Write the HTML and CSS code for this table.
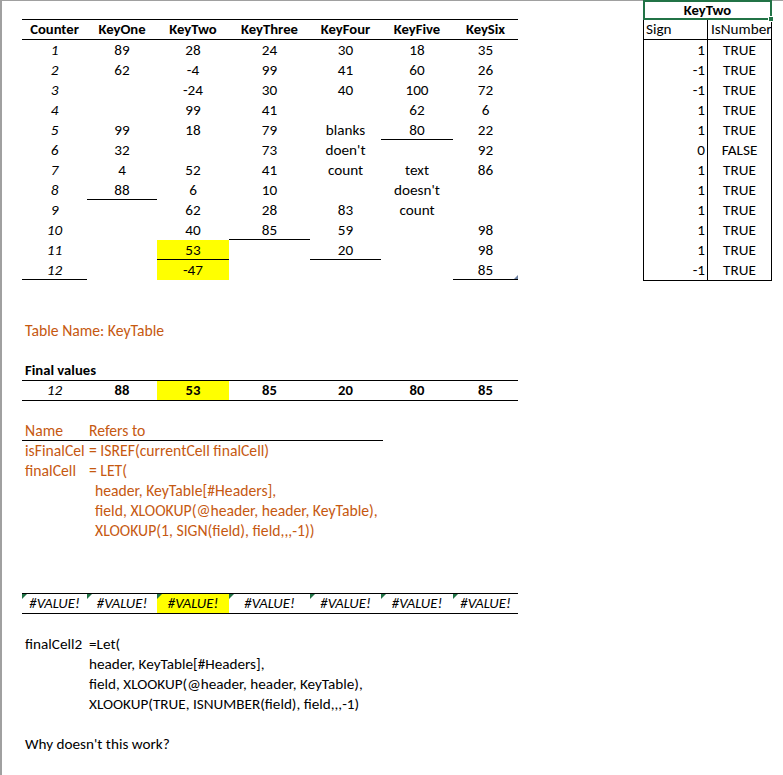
FILE: index.html
```html
<!DOCTYPE html>
<html>
<head>
<meta charset="utf-8">
<link rel="stylesheet" href="styles.css">
</head>
<body>
<div class="frame">
  <div class="top">
    <div class="main-wrap">
      <div class="grid7 head">
        <div class="cell">Counter</div><div class="cell">KeyOne</div><div class="cell">KeyTwo</div><div class="cell">KeyThree</div><div class="cell">KeyFour</div><div class="cell">KeyFive</div><div class="cell">KeySix</div>
      </div>
      <div class="grid7 body">
        <div class="cell i">1</div><div class="cell">89</div><div class="cell">28</div><div class="cell">24</div><div class="cell">30</div><div class="cell">18</div><div class="cell">35</div>
        <div class="cell i">2</div><div class="cell">62</div><div class="cell">-4</div><div class="cell">99</div><div class="cell">41</div><div class="cell">60</div><div class="cell">26</div>
        <div class="cell i">3</div><div class="cell"></div><div class="cell">-24</div><div class="cell">30</div><div class="cell">40</div><div class="cell">100</div><div class="cell">72</div>
        <div class="cell i">4</div><div class="cell"></div><div class="cell">99</div><div class="cell">41</div><div class="cell"></div><div class="cell">62</div><div class="cell">6</div>
        <div class="cell i">5</div><div class="cell">99</div><div class="cell">18</div><div class="cell">79</div><div class="cell">blanks</div><div class="cell u">80</div><div class="cell">22</div>
        <div class="cell i">6</div><div class="cell">32</div><div class="cell"></div><div class="cell">73</div><div class="cell">doen't</div><div class="cell"></div><div class="cell">92</div>
        <div class="cell i">7</div><div class="cell">4</div><div class="cell">52</div><div class="cell">41</div><div class="cell">count</div><div class="cell">text</div><div class="cell">86</div>
        <div class="cell i">8</div><div class="cell u">88</div><div class="cell">6</div><div class="cell">10</div><div class="cell"></div><div class="cell">doesn't</div><div class="cell"></div>
        <div class="cell i">9</div><div class="cell"></div><div class="cell">62</div><div class="cell">28</div><div class="cell">83</div><div class="cell">count</div><div class="cell"></div>
        <div class="cell i">10</div><div class="cell"></div><div class="cell">40</div><div class="cell u">85</div><div class="cell">59</div><div class="cell"></div><div class="cell">98</div>
        <div class="cell i">11</div><div class="cell"></div><div class="cell y u">53</div><div class="cell"></div><div class="cell u">20</div><div class="cell"></div><div class="cell">98</div>
        <div class="cell i u">12</div><div class="cell"></div><div class="cell y">-47</div><div class="cell"></div><div class="cell"></div><div class="cell"></div><div class="cell u last">85<span class="resize"></span></div>
      </div>
    </div>
    <div class="side">
      <div class="side-head">KeyTwo<span class="handle"></span></div>
      <div class="side-body">
        <div class="scell l">Sign</div><div class="scell l2">IsNumber</div>
        <div class="scell r">1</div><div class="scell c">TRUE</div>
        <div class="scell r">-1</div><div class="scell c">TRUE</div>
        <div class="scell r">-1</div><div class="scell c">TRUE</div>
        <div class="scell r">1</div><div class="scell c">TRUE</div>
        <div class="scell r">1</div><div class="scell c">TRUE</div>
        <div class="scell r">0</div><div class="scell c">FALSE</div>
        <div class="scell r">1</div><div class="scell c">TRUE</div>
        <div class="scell r">1</div><div class="scell c">TRUE</div>
        <div class="scell r">1</div><div class="scell c">TRUE</div>
        <div class="scell r">1</div><div class="scell c">TRUE</div>
        <div class="scell r">1</div><div class="scell c">TRUE</div>
        <div class="scell r">-1</div><div class="scell c">TRUE</div>
      </div>
    </div>
  </div>

  <div class="line orange tname">Table Name: KeyTable</div>

  <div class="line bold fv-label">Final values</div>
  <div class="grid7 fv">
    <div class="cell i">12</div><div class="cell b">88</div><div class="cell b y">53</div><div class="cell b">85</div><div class="cell b">20</div><div class="cell b">80</div><div class="cell b">85</div>
  </div>

  <div class="names orange">
    <div class="nrow nhead"><span class="ncol">Name</span><span>Refers to</span></div>
    <div class="nrow"><span class="ncol">isFinalCel</span><span>= ISREF(currentCell finalCell)</span></div>
    <div class="nrow"><span class="ncol">finalCell</span><span>= LET(</span></div>
    <div class="nrow"><span class="ncol"></span><span class="ind">header, KeyTable[#Headers],</span></div>
    <div class="nrow"><span class="ncol"></span><span class="ind">field, XLOOKUP(@header, header, KeyTable),</span></div>
    <div class="nrow"><span class="ncol"></span><span class="ind">XLOOKUP(1, SIGN(field), field,,,-1))</span></div>
  </div>

  <div class="grid7 errs">
    <div class="cell e">#VALUE!</div><div class="cell e">#VALUE!</div><div class="cell e y">#VALUE!</div><div class="cell e">#VALUE!</div><div class="cell e">#VALUE!</div><div class="cell e">#VALUE!</div><div class="cell e">#VALUE!</div>
  </div>

  <div class="names2">
    <div class="nrow"><span class="ncol">finalCell2</span><span>=Let(</span></div>
    <div class="nrow"><span class="ncol"></span><span>header, KeyTable[#Headers],</span></div>
    <div class="nrow"><span class="ncol"></span><span>field, XLOOKUP(@header, header, KeyTable),</span></div>
    <div class="nrow"><span class="ncol"></span><span>XLOOKUP(TRUE, ISNUMBER(field), field,,,-1)</span></div>
  </div>

  <div class="line why">Why doesn't this work?</div>
</div>
</body>
</html>
```

FILE: styles.css
```css
* { box-sizing: border-box; }
html, body { margin: 0; padding: 0; background: #fff; }
body {
  font-family: Carlito, Calibri, Lato, "Open Sans", sans-serif;
  font-size: 15.2px;
  color: #000;
  width: 783px;
  height: 775px;
  overflow: hidden;
}
.frame {
  border-left: 2px solid #a0a0a0;
  border-top: 1px solid #a0a0a0;
  height: 775px;
}
.top {
  display: flex;
  height: 279px;
}
.main-wrap {
  margin-left: 20px;
  margin-top: 18px;
  width: 496px;
}
.grid7 {
  display: grid;
  grid-template-columns: 65px 70px 72px 81px 71px 72px 65px;
  width: 496px;
}
.cell {
  height: 20px;
  line-height: 20px;
  text-align: center;
  white-space: nowrap;
  border-bottom: 1px solid transparent;
  position: relative;
}
.head {
  border-top: 1px solid #000;
  border-bottom: 1px solid #000;
  font-weight: bold;
  font-size: 14.67px;
}
.head .cell { border-bottom: 0; height: 19px; line-height: 19px; }
.i { font-style: italic; }
.b { font-weight: bold; font-size: 14.67px; }
.u { border-bottom-color: #000; }
.y { background: #ffff00; }
.resize {
  position: absolute;
  right: 0;
  bottom: 0;
  width: 0;
  height: 0;
  border-bottom: 4px solid #6b7fa0;
  border-left: 4px solid transparent;
}

.side {
  margin-left: 125px;
  margin-top: -1px;
  width: 129px;
}
.side-head {
  position: relative;
  height: 20px;
  border: 2px solid #217346;
  text-align: center;
  font-weight: bold;
  font-size: 14.67px;
  line-height: 16px;
}
.handle {
  position: absolute;
  right: -4px;
  bottom: -4px;
  width: 6px;
  height: 6px;
  background: #217346;
  border: 1px solid #fff;
}
.side-body {
  display: grid;
  grid-template-columns: 64px 63px;
  border-left: 1px solid #000;
  border-right: 1px solid #000;
  border-bottom: 1px solid #000;
}
.scell {
  height: 20px;
  line-height: 20px;
  white-space: nowrap;
  overflow: hidden;
}
.scell.r, .scell.l { border-right: 1px solid #000; }
.scell.l, .scell.l2 { border-bottom: 1px solid #000; line-height: 19px; padding-left: 2px; }
.scell.l2 { padding-left: 3px; }
.scell.r { text-align: right; padding-right: 2px; }
.scell.c { text-align: center; }

.line {
  height: 20px;
  line-height: 20px;
  padding-left: 23px;
  white-space: nowrap;
}
.orange { color: #c65911; font-size: 15.7px; }
.bold { font-weight: bold; font-size: 14.67px; }
.tname { margin-top: 41px; }
.fv-label { margin-top: 19px; }
.fv {
  margin-left: 20px;
  border-top: 1px solid #000;
  border-bottom: 1px solid #000;
}
.fv .cell { height: 19px; line-height: 19px; border-bottom: 0; }

.names {
  margin-top: 20px;
  margin-left: 20px;
  width: 361px;
}
.nrow {
  display: flex;
  height: 20px;
  line-height: 20px;
  white-space: nowrap;
}
.nhead { border-bottom: 1px solid #000; }
.ncol { width: 67px; padding-left: 3px; flex: none; }
.ind { padding-left: 6px; }

.errs {
  margin-left: 20px;
  margin-top: 52px;
  border-top: 1px solid #000;
  border-bottom: 1px solid #000;
}
.errs .cell { height: 19px; line-height: 19px; border-bottom: 0; }
.e { font-style: italic; font-size: 14.67px; }
.e::before {
  content: "";
  position: absolute;
  left: 0;
  top: 0;
  width: 0;
  height: 0;
  border-top: 5px solid #217346;
  border-right: 5px solid transparent;
}

.names2 {
  margin-top: 20px;
  margin-left: 20px;
}
.why { margin-top: 20px; }
```
